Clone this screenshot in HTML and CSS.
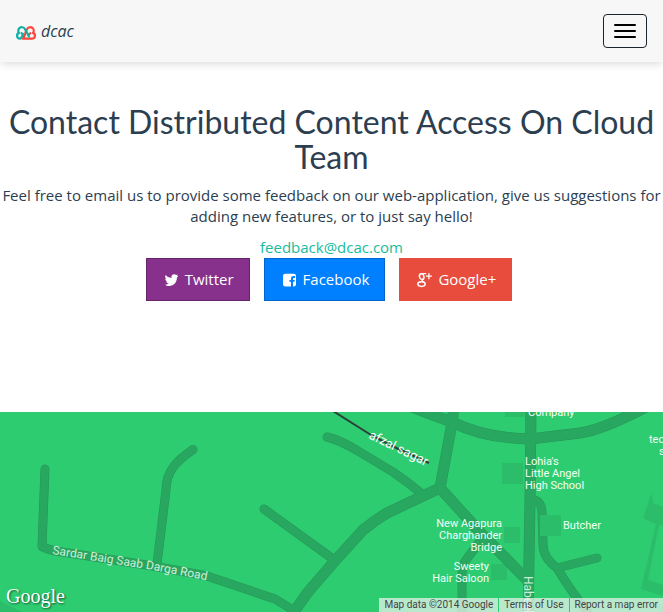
FILE: index.html
```html
<!DOCTYPE html>
<html lang="en">
<head>
<meta charset="utf-8">
<meta name="viewport" content="width=device-width, initial-scale=1">
<title>dcac</title>
<link rel="stylesheet" href="styles.css">
</head>
<body>
<header class="navbar">
  <a class="brand" href="#">
    <svg class="brand-logo" viewBox="0 0 20 14" aria-hidden="true">
      <g fill="none" stroke-width="2.2" stroke-linecap="round" stroke-linejoin="round">
        <path stroke="#ff4438" d="M12.5 9L14.3 7.2M7 12.7H15.8A3 3 0 0 0 17 6.9A3.3 3.3 0 0 0 11.4 2.6Q9.6 5 9.2 8Z"/>
        <path stroke="#10b0a5" d="M4.600 12.700H4.2A3 3 0 0 1 3 6.900A3.300 3.300 0 0 1 8.600 2.600Q10.400 5 13 10.600M4.600 12.700L7.200 8.200L5.600 7.200"/>
      </g>
    </svg>
    <span>dcac</span>
  </a>
  <button class="menu-toggle" type="button" aria-label="Toggle navigation">
    <span class="bar"></span><span class="bar"></span><span class="bar"></span>
  </button>
</header>

<main>
  <section class="contact">
    <h1>Contact Distributed Content Access On Cloud Team</h1>
    <p>Feel free to email us to provide some feedback on our web-application, give us suggestions for adding new features, or to just say hello!</p>
    <p class="email"><a href="mailto:feedback@dcac.com">feedback@dcac.com</a></p>
    <ul class="social">
      <li><a class="btn twitter" href="#">
        <svg class="icon" viewBox="0 0 19 16" aria-hidden="true"><path fill="#fff" d="M16.2 4.1Q15.7 4.9 14.9 5.5C15.1 10.2 11.7 14 7.3 14C5.6 14 4.1 13.6 2.9 12.7Q5.1 12.9 6.8 11.6Q4.8 11.4 4.1 9.6H5.3Q3.1 8.8 3.1 6.6L4.3 6.9Q2.3 5.2 3.5 2.9Q5.8 5.8 9.5 6C9 3.8 10.3 2.3 12.2 2.3Q13.4 2.3 14.2 3.1L15.8 2.5Q15.5 3.5 14.7 4.1Z"/></svg>
        <span>Twitter</span></a></li>
      <li><a class="btn facebook" href="#">
        <svg class="icon" viewBox="0 0 19 16" aria-hidden="true"><path fill="#fff" fill-rule="evenodd" d="M5.400 1.700H13.600A2.400 2.400 0 0 1 16 4.100V12.200A2.400 2.400 0 0 1 13.600 14.600H13V9.800H14.500L14.800 7.900H13V6.800Q13 5.900 14 5.900H15V4.100H13.400Q11 4.100 11 6.500V7.900H9.400V9.800H11V14.600H5.400A2.400 2.400 0 0 1 3 12.200V4.100A2.400 2.400 0 0 1 5.400 1.700Z"/></svg>
        <span>Facebook</span></a></li>
      <li><a class="btn google" href="#">
        <svg class="icon" viewBox="0 0 19 16" aria-hidden="true">
          <g fill="none" stroke="#fff">
            <ellipse cx="6.7" cy="4.6" rx="2.2" ry="2.9" stroke-width="1.5" transform="rotate(-14 6.7 4.6)"/>
            <path stroke-width="1.3" d="M6.5 1.6H11.2M8 7.2Q6.4 8.3 7.5 9.1L9.1 10.4"/>
            <ellipse cx="6.5" cy="12.1" rx="3.7" ry="2.3" stroke-width="1.5"/>
            <path stroke-width="1.3" d="M13.9 1.2V7.2M10.9 4.2H16.9"/>
          </g>
        </svg>
        <span>Google+</span></a></li>
    </ul>
  </section>

  <section class="map" aria-label="Map">
    <svg class="map-canvas" viewBox="0 0 663 200" preserveAspectRatio="xMidYMid slice">
      <defs>
        <g id="minor-roads">
          <path d="M45 57L42 134.500Q48 138 62 140L153 154L207 164L275 187L293 198"/>
          <path d="M157 152L166 78C166 58 178 48 193 37.500"/>
          <path d="M264 97L333 147"/>
          <path d="M327 25Q340 28 358 39L393 60Q409 71 422 82"/>
          <path d="M481 128L466 148Q462 153 462 162V204"/>
          <path d="M531 88Q541 87 542 100L543 132Q543 146 557 156Q570 178 592 206"/>
          <path d="M557 156L597 146"/>
        </g>
        <g id="major-roads">
          <path d="M291 204L308 180Q335 148 363 118Q375 108 387 101L440 76L452 11L454 -6"/>
          <path d="M412 -5Q434 4 452 10Q484 26 530 27L580 21Q602 18 646 -5"/>
          <path d="M531 -5L530 90L528 205"/>
          <path d="M440 76L480 120L528 169"/>
        </g>
      </defs>
      <g class="buildings">
        <path d="M505 0h20v5h-20zM502 51h21v21h-21zM504 115h16v16h-16zM491 152h16v16h-16z"/>
        <path d="M652 80L653 91L663 95V114L659 113L648 168L663 173V184L641 177L656 112L643 106Z"/>
        <path d="M0 189L22 200H0ZM643 188L663 192V200Z"/>
      </g>
      <g class="road-edge minor"><use href="#minor-roads"/></g>
      <g class="road-edge major"><use href="#major-roads"/></g>
      <g class="road minor"><use href="#minor-roads"/></g>
      <g class="road major"><use href="#major-roads"/></g>
      <path class="buildings" d="M540 103h21v21h-21z"/>
      <path class="rail" d="M333 -1L371 23L392 34L429 51"/>
      <path id="sardar-line" fill="none" d="M52 142L153 158L220 171"/>
      <g class="labels">
        <text class="road-name"><textPath href="#sardar-line">Sardar Baig Saab Darga Road</textPath></text>
        <text class="water-name" transform="translate(368 26) rotate(26)">afzal sagar</text>
        <text class="road-name" transform="translate(524 164) rotate(90)">Habeeb</text>
        <text x="528" y="4">Company</text>
        <text x="525" y="53">Lohia's<tspan x="525" dy="12">Little Angel</tspan><tspan x="525" dy="12">High School</tspan></text>
        <text x="563" y="117">Butcher</text>
        <text class="end" x="502" y="115">New Agapura<tspan x="502" dy="12">Charghander</tspan><tspan x="502" dy="12">Bridge</tspan></text>
        <text class="end" x="489" y="158">Sweety<tspan x="489" dy="12">Hair Saloon</tspan></text>
        <text x="649" y="31">tech</text>
        <text x="659" y="43">sol</text>
      </g>
    </svg>
    <a class="map-logo" href="#">Google</a>
    <div class="map-credits">
      <span>Map data ©2014 Google</span>
      <a href="#">Terms of Use</a>
      <a href="#">Report a map error</a>
    </div>
  </section>
</main>
</body>
</html>
```
FILE: styles.css
```css
* {
  box-sizing: border-box;
}

body {
  margin: 0;
  background: #fff;
  color: #2c3e50;
  font: 15px/21px "Open Sans", sans-serif;
}

a {
  text-decoration: none;
}

.navbar {
  display: flex;
  align-items: center;
  justify-content: space-between;
  height: 62px;
  padding: 0 16px;
  background: #f7f7f7;
  box-shadow: 0 0 10px rgba(0, 0, 0, 0.2);
}

.brand {
  display: flex;
  align-items: center;
  gap: 5px;
  color: #2c3e50;
  font-size: 16px;
  font-style: italic;
}

.brand-logo {
  width: 20px;
  height: 14px;
  margin-top: 4px;
}

.menu-toggle {
  display: flex;
  flex-direction: column;
  gap: 4px;
  padding: 9px 10px;
  border: 1px solid #1a242f;
  border-radius: 4px;
  background: transparent;
}

.bar {
  width: 22px;
  height: 2px;
  border-radius: 1px;
  background: #000;
}

.contact {
  padding: 42px 0 111px;
  text-align: center;
}

h1 {
  margin: 0 0 11px;
  font: 400 32px/35px Lato, sans-serif;
}

p {
  margin: 0 0 10px;
}

.email {
  margin: 0;
}

.email a {
  color: #18bc9c;
}

.social {
  display: flex;
  justify-content: center;
  gap: 14px;
  margin: 0;
  padding: 0 5px 0 0;
  list-style: none;
}

.btn {
  display: flex;
  align-items: center;
  gap: 4px;
  padding: 10px 15px;
  border: 1px solid;
  color: #fff;
}

.icon {
  width: 19px;
  height: 16px;
}

.twitter {
  background: #87318c;
  border-color: #642468;
}

.facebook {
  background: #0080ff;
  border-color: #0066cc;
}

.google {
  background: #e74c3c;
  border-color: #e74c3c;
}

.map {
  position: relative;
  height: 200px;
  overflow: hidden;
  background: #2ecc71;
}

.map-canvas {
  display: block;
  width: 100%;
  height: 100%;
}

.buildings {
  fill: #2bbd69;
}

.road,
.road-edge {
  fill: none;
  stroke-linecap: round;
  stroke-linejoin: round;
}

.road {
  stroke: #27a75f;
}

.road-edge {
  stroke: #289657;
}

.road.minor {
  stroke-width: 8px;
}

.road-edge.minor {
  stroke-width: 9px;
}

.road.major {
  stroke-width: 10px;
}

.road-edge.major {
  stroke-width: 11px;
}

.rail {
  fill: none;
  stroke: #2c3f3a;
  stroke-width: 2px;
}

.labels {
  fill: #f2fff6;
  font: 11px Roboto, sans-serif;
}

.end {
  text-anchor: end;
}

.road-name {
  fill: #cdeeda;
  font-size: 12px;
}

.water-name {
  fill: #fff;
  font-size: 13px;
}

.map-logo {
  position: absolute;
  left: 6px;
  bottom: 4px;
  color: #fff;
  font: 20px/24px "Liberation Serif", serif;
  text-shadow: 1px 1px 2px rgba(0, 0, 0, 0.6);
}

.map-credits {
  position: absolute;
  right: 0;
  bottom: 0;
  display: flex;
  gap: 1px;
  font: 10px/14px Roboto, sans-serif;
}

.map-credits > * {
  padding: 0 5px;
  background: rgba(245, 245, 245, 0.7);
  color: #444;
  white-space: nowrap;
}
```
